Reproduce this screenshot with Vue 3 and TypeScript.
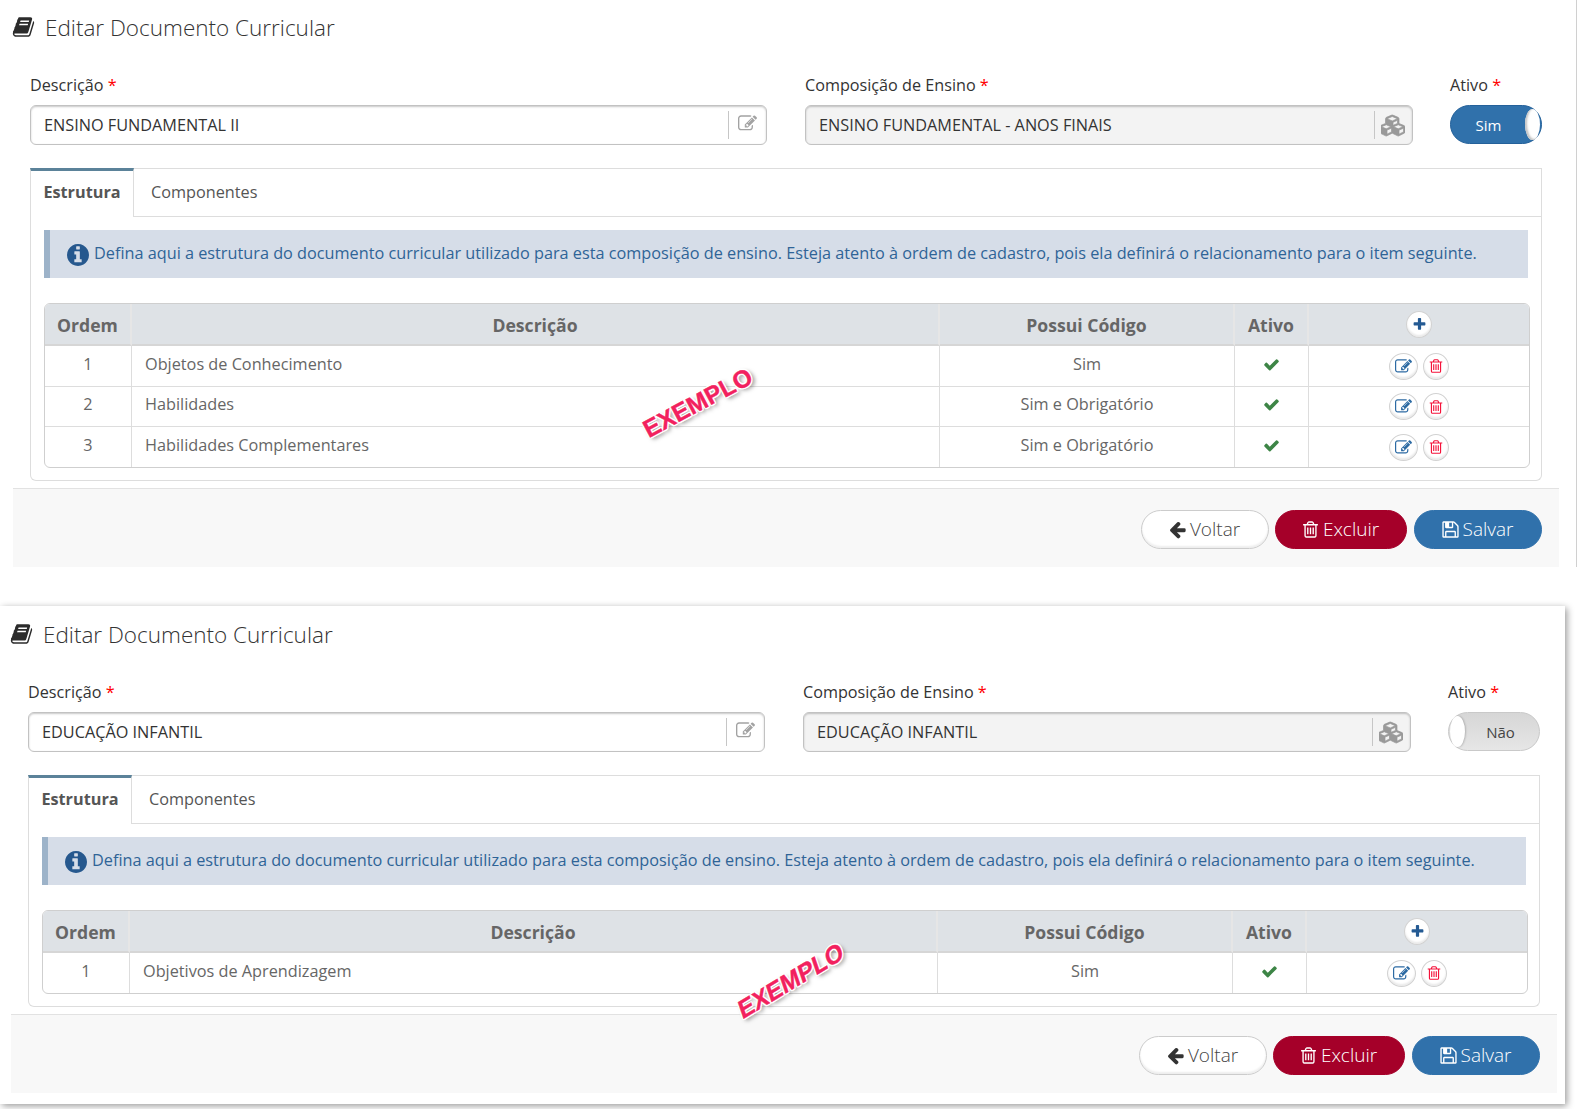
<script setup lang="ts">
const icons: Record<string, string> = {
  book: 'M1703 478q40 57 18 129l-275 906q-19 64-76.5 107.5t-122.5 43.5h-923q-77 0-148.5-53.5t-99.5-131.5q-24-67-2-127 0-4 3-27t4-37q1-8-3-21.5t-3-19.5q2-11 8-21t16.5-23.5 16.5-23.5q23-38 45-91.5t30-91.5q3-10 .5-30t-.5-28q3-11 17-28t17-23q21-36 42-92t25-90q1-9-2.5-32t.5-28q4-13 22-30.5t22-22.5q19-26 42.5-84.5t27.5-96.5q1-8-3-25.5t-2-26.5q2-8 9-18t18-23 17-21q8-12 16.5-30.5t15-35 16-36 19.5-32 26.5-23.5 36-11.5 47.5 5.5l-1 3q38-9 51-9h761q74 0 114 56t18 130l-274 906q-36 119-71.5 153.5t-128.5 34.5h-869q-27 0-38 15-11 16-1 43 24 70 144 70h923q29 0 56-15.5t35-41.5l300-987q7-22 5-57 38 15 59 43zm-1064 2q-4 13 2 22.5t20 9.5h608q13 0 25.5-9.5t16.5-22.5l21-64q4-13-2-22.5t-20-9.5h-608q-13 0-25.5 9.5t-16.5 22.5zm-83 256q-4 13 2 22.5t20 9.5h608q13 0 25.5-9.5t16.5-22.5l21-64q4-13-2-22.5t-20-9.5h-608q-13 0-25.5 9.5t-16.5 22.5z',
  edit: 'M888 1184l116-116-152-152-116 116v56h96v96h56zm440-720q-16-16-33 1l-350 350q-17 17-1 33t33-1l350-350q17-17 1-33zm80 594v190q0 119-84.5 203.5t-203.5 84.5h-832q-119 0-203.5-84.5t-84.5-203.5v-832q0-119 84.5-203.5t203.5-84.5h832q63 0 117 25 15 7 18 23 3 17-9 29l-49 49q-14 14-32 8-23-6-45-6h-832q-66 0-113 47t-47 113v832q0 66 47 113t113 47h832q66 0 113-47t47-113v-126q0-13 9-22l64-64q15-15 35-7t20 29zm-96-738l288 288-672 672h-288v-288zm444 132l-92 92-288-288 92-92q28-28 68-28t68 28l152 152q28 28 28 68t-28 68z',
  cubes: 'M512 1632l384-192v-314l-384 164v342zm-64-454l404-173-404-173-404 173zm1088 454l384-192v-314l-384 164v342zm-64-454l404-173-404-173-404 173zm-448-293l384-165v-266l-384 164v267zm-64-379l441-189-441-189-441 189zm1088 518v416q0 36-19 67t-52 47l-448 224q-25 14-57 14t-57-14l-448-224q-4-2-7-4-2 2-7 4l-448 224q-25 14-57 14t-57-14l-448-224q-33-16-52-47t-19-67v-416q0-38 21.5-70t56.5-48l434-186v-400q0-38 21.5-70t56.5-48l448-192q23-10 50-10t50 10l448 192q35 16 56.5 48t21.5 70v400l434 186q36 16 57 48t21 70z',
  info: 'M1152 1376v-160q0-14-9-23t-23-9h-96v-512q0-14-9-23t-23-9h-320q-14 0-23 9t-9 23v160q0 14 9 23t23 9h96v320h-96q-14 0-23 9t-9 23v160q0 14 9 23t23 9h448q14 0 23-9t9-23zm-128-896v-160q0-14-9-23t-23-9h-192q-14 0-23 9t-9 23v160q0 14 9 23t23 9h192q14 0 23-9t9-23zm640 416q0 209-103 385.5t-279.5 279.5-385.5 103-385.5-103-279.5-279.5-103-385.5 103-385.5 279.5-279.5 385.5-103 385.5 103 279.5 279.5 103 385.5z',
  check: 'M1671 566q0 40-28 68l-724 724-136 136q-28 28-68 28t-68-28l-136-136-362-362q-28-28-28-68t28-68l136-136q28-28 68-28t68 28l294 295 656-657q28-28 68-28t68 28l136 136q28 28 28 68z',
  plus: 'M1600 736v192q0 40-28 68t-68 28h-416v416q0 40-28 68t-68 28h-192q-40 0-68-28t-28-68v-416h-416q-40 0-68-28t-28-68v-192q0-40 28-68t68-28h416v-416q0-40 28-68t68-28h192q40 0 68 28t28 68v416h416q40 0 68 28t28 68z',
  trash: 'M704 736v576q0 14-9 23t-23 9h-64q-14 0-23-9t-9-23v-576q0-14 9-23t23-9h64q14 0 23 9t9 23zm256 0v576q0 14-9 23t-23 9h-64q-14 0-23-9t-9-23v-576q0-14 9-23t23-9h64q14 0 23 9t9 23zm256 0v576q0 14-9 23t-23 9h-64q-14 0-23-9t-9-23v-576q0-14 9-23t23-9h64q14 0 23 9t9 23zm128 724v-948h-896v948q0 22 7 40.5t14.5 27 10.5 8.5h832q3 0 10.5-8.5t14.5-27 7-40.5zm-672-1076h448l-48-117q-7-9-17-11h-317q-10 2-17 11zm928 32v64q0 14-9 23t-23 9h-96v948q0 83-47 143.5t-113 60.5h-832q-66 0-113-58.5t-47-141.5v-952h-96q-14 0-23-9t-9-23v-64q0-14 9-23t23-9h309l70-167q15-37 54-63t79-26h320q40 0 79 26t54 63l70 167h309q14 0 23 9t9 23z',
  save: 'M512 1536h768v-384h-768v384zm896 0h128v-896q0-14-10-38.5t-20-34.5l-281-281q-10-10-34-20t-39-10v416q0 40-28 68t-68 28h-576q-40 0-68-28t-28-68v-416h-128v1280h128v-416q0-40 28-68t68-28h832q40 0 68 28t28 68v416zm-384-928v-320q0-13-9.5-22.5t-22.5-9.5h-192q-13 0-22.5 9.5t-9.5 22.5v320q0 13 9.5 22.5t22.5 9.5h192q13 0 22.5-9.5t9.5-22.5zm640 32v928q0 40-28 68t-68 28h-1344q-40 0-68-28t-28-68v-1344q0-40 28-68t68-28h928q40 0 88 20t76 48l280 280q28 28 48 76t20 88z',
  back: 'M1664 896v128q0 53-32.5 90.5t-84.5 37.5h-704l293 294q38 36 38 90t-38 90l-75 76q-37 37-90 37-52 0-91-37l-651-652q-37-37-37-90 0-52 37-91l651-650q38-38 91-38 52 0 90 38l75 74q38 38 38 91t-38 91l-293 293h704q52 0 84.5 37.5t32.5 90.5z',
}

interface Row { order: number; text: string; code: string }
interface Panel {
  id: string
  desc: string
  comp: string
  on: boolean
  rows: Row[]
}

const panels: Panel[] = [
  {
    id: 'a',
    desc: 'ENSINO FUNDAMENTAL II',
    comp: 'ENSINO FUNDAMENTAL - ANOS FINAIS',
    on: true,
    rows: [
      { order: 1, text: 'Objetos de Conhecimento', code: 'Sim' },
      { order: 2, text: 'Habilidades', code: 'Sim e Obrigatório' },
      { order: 3, text: 'Habilidades Complementares', code: 'Sim e Obrigatório' },
    ],
  },
  {
    id: 'b',
    desc: 'EDUCAÇÃO INFANTIL',
    comp: 'EDUCAÇÃO INFANTIL',
    on: false,
    rows: [{ order: 1, text: 'Objetivos de Aprendizagem', code: 'Sim' }],
  },
]
</script>

<template>
  <div class="page">
    <section v-for="p in panels" :key="p.id" class="panel" :class="'panel-' + p.id">
      <h1 class="title">
        <svg class="ic ic-book" viewBox="0 0 1792 1792"><path :d="icons.book" /></svg>
        <span>Editar Documento Curricular</span>
      </h1>

      <div class="form">
        <div class="field">
          <label class="lbl">Descrição <i>*</i></label>
          <div class="ctl">
            <span class="val">{{ p.desc }}</span>
            <span class="addon"><svg class="ic ic-add" viewBox="0 0 1792 1792"><path :d="icons.edit" /></svg></span>
          </div>
        </div>
        <div class="field">
          <label class="lbl">Composição de Ensino <i>*</i></label>
          <div class="ctl ctl-off">
            <span class="val">{{ p.comp }}</span>
            <span class="addon"><svg class="ic ic-cubes" viewBox="0 0 2048 1792"><path :d="icons.cubes" /></svg></span>
          </div>
        </div>
        <div class="field field-toggle">
          <label class="lbl">Ativo <i>*</i></label>
          <div class="toggle" :class="p.on ? 'on' : 'off'">
            <span class="knob"></span>
            <span class="tlabel">{{ p.on ? 'Sim' : 'Não' }}</span>
          </div>
        </div>
      </div>

      <div class="tabs">
        <div class="tabbar">
          <span class="tab active">Estrutura</span>
          <span class="tab">Componentes</span>
        </div>
        <div class="tabbody">
          <div class="alert">
            <svg class="ic ic-info" viewBox="128 128 1536 1536"><path :d="icons.info" /></svg>
            <span>Defina aqui a estrutura do documento curricular utilizado para esta composição de ensino. Esteja atento à ordem de cadastro, pois ela definirá o relacionamento para o item seguinte.</span>
          </div>
          <table class="grid">
            <colgroup>
              <col class="c1" /><col class="c2" /><col class="c3" /><col class="c4" /><col />
            </colgroup>
            <thead>
              <tr>
                <th>Ordem</th>
                <th>Descrição</th>
                <th>Possui Código</th>
                <th>Ativo</th>
                <th>
                  <button class="round r-plus" type="button">
                    <svg class="ic ic-plus" viewBox="0 0 1792 1792"><path :d="icons.plus" /></svg>
                  </button>
                </th>
              </tr>
            </thead>
            <tbody>
              <tr v-for="r in p.rows" :key="r.order">
                <td class="ctr">{{ r.order }}</td>
                <td>{{ r.text }}</td>
                <td class="ctr">{{ r.code }}</td>
                <td class="ctr chk"><svg class="ic ic-check" viewBox="0 0 1792 1792"><path :d="icons.check" /></svg></td>
                <td class="acts">
                  <span class="actwrap">
                    <button class="round r-edit" type="button">
                      <svg class="ic ic-e" viewBox="0 0 1792 1792"><path :d="icons.edit" /></svg>
                    </button>
                    <button class="round r-del" type="button">
                      <svg class="ic ic-t" viewBox="0 0 1792 1792"><path :d="icons.trash" /></svg>
                    </button>
                  </span>
                </td>
              </tr>
            </tbody>
          </table>
        </div>
      </div>

      <div class="footer">
        <button class="btn b-back" type="button"><svg class="ic" viewBox="0 0 1792 1792"><path :d="icons.back" /></svg><span>Voltar</span></button>
        <button class="btn b-del" type="button"><svg class="ic" viewBox="0 0 1792 1792"><path :d="icons.trash" /></svg><span>Excluir</span></button>
        <button class="btn b-save" type="button"><svg class="ic" viewBox="0 0 1792 1792"><path :d="icons.save" /></svg><span>Salvar</span></button>
      </div>

      <span class="stamp">EXEMPLO</span>
    </section>
  </div>
</template>

<style scoped>
.page {
  width: 1579px;
  height: 1109px;
  background: #fff;
  font-family: "Open Sans", "Liberation Sans", sans-serif;
  color: #333;
  overflow: hidden;
}
.panel {
  position: relative;
  box-sizing: border-box;
  background: #fff;
}
.panel-a {
  width: 1577px;
  height: 567px;
  padding: 0 17px 0 13px;
  border-right: 1px solid #d0d0d0;
}
.panel-b {
  width: 1565px;
  height: 498px;
  margin-top: 39px;
  padding: 0 8px 0 11px;
  box-shadow: 2px 2px 7px rgba(0, 0, 0, 0.4);
}
.ic { display: block; fill: currentColor; flex: none; }

.title {
  display: flex;
  align-items: center;
  margin: 0;
  padding-top: 10px;
  height: 46px;
  box-sizing: border-box;
  font-size: 22.5px;
  font-weight: 300;
  color: #333;
}
.panel-a .title { padding-top: 8px; }
.ic-book { width: 23px; height: 24px; margin-right: 10px; margin-left: -1px; color: #2b2b2b; }

.form {
  display: grid;
  grid-template-columns: 737px 608px 91px;
  column-gap: 38px;
  margin: 28px 18px 0 17px;
}
.panel-b .form { margin-top: 29px; }
.field-toggle { margin-left: -1px; }
.lbl {
  display: block;
  height: 22px;
  margin-bottom: 9px;
  font-size: 16.2px;
  line-height: 22px;
  color: #333;
}
.lbl i { color: #f00; font-style: normal; }
.ctl {
  display: flex;
  align-items: center;
  box-sizing: border-box;
  height: 40px;
  padding-left: 13px;
  border: 1px solid #c2c2c2;
  border-radius: 6px;
  background: #fff;
  box-shadow: inset 0 1px 2px rgba(0, 0, 0, 0.22);
}
.ctl-off { background: #f3f3f3; }
.val { flex: 1; font-size: 16.25px; color: #333; }
.addon {
  display: flex;
  align-items: center;
  justify-content: center;
  box-sizing: border-box;
  width: 38px;
  height: 28px;
  border-left: 1px solid #c6c6c6;
  color: #a2a2a2;
}
.ic-add { width: 19px; height: 19px; margin-top: -3px; }
.ic-cubes { width: 24px; height: 23px; margin-left: -2px; color: #999; stroke: currentColor; stroke-width: 60; }

.toggle {
  position: relative;
  display: flex;
  align-items: center;
  justify-content: center;
  box-sizing: border-box;
  height: 39px;
  border-radius: 20px;
  font-size: 15px;
}
.toggle.on { background: #3071ab; border: 1px solid #24619a; color: #fff; padding-right: 15px; }
.toggle.off {
  background: linear-gradient(#d6d6d6, #e6e6e6);
  border: 1px solid #c9c9c9;
  color: #444;
  padding-left: 13px;
}
.knob {
  position: absolute;
  top: 3px;
  width: 15px;
  height: 31px;
  background: #fff;
  border-radius: 50%;
}
.on .knob {
  right: 1px;
  box-shadow: inset 2px -1px 2px #c4c4c4;
}
.off .knob {
  left: 1px;
  box-shadow: 1px 0 2px rgba(0, 0, 0, 0.2);
}

.tabs { margin: 23px 17px 0; }
.tabbar {
  display: flex;
  box-sizing: border-box;
  height: 49px;
  border: 1px solid #ddd;
}
.tab {
  box-sizing: border-box;
  padding: 0 17px;
  font-size: 16.25px;
  line-height: 47px;
  color: #555;
}
.tab.active {
  width: 104px;
  height: 49px;
  margin: -1px 0 -1px -1px;
  padding: 0;
  line-height: 42px;
  text-align: center;
  font-weight: 700;
  border-top: 3px solid #5b8299;
  border-left: 1px solid #ddd;
  border-right: 1px solid #ddd;
  background: #fff;
  position: relative;
  z-index: 1;
}
.tabbody {
  box-sizing: border-box;
  padding: 13px 13px 12px;
  border: 1px solid #ddd;
  border-top: none;
  border-radius: 0 0 6px 6px;
}
.alert {
  display: flex;
  align-items: center;
  box-sizing: border-box;
  height: 48px;
  padding: 0 0 2px 18px;
  background: #d6dde8;
  border-left: 6px solid #9db3c9;
  font-size: 16.25px;
  color: #2f6497;
}
.ic-info { width: 22px; height: 22px; margin-right: 5px; margin-left: -1px; color: #26588e; margin-top: 4px; }

.grid {
  width: calc(100% + 2px);
  margin-top: 25px;
  table-layout: fixed;
  border-collapse: separate;
  border-spacing: 0;
  border: 1px solid #cfcfcf;
  border-radius: 6px;
  overflow: hidden;
  font-size: 16.25px;
  color: #666;
}
.c1 { width: 87px; }
.c2 { width: 808px; }
.c3 { width: 295px; }
.c4 { width: 74px; }
th {
  box-sizing: border-box;
  height: 42px;
  padding: 2px 0 0;
  background: #dee2e6;
  font-size: 17.6px;
  font-weight: 700;
  color: #666;
  border-bottom: 2px solid #d6d6d6;
  border-right: 2px solid #e6e6e6;
}
th:last-child { border-right: none; }
td {
  box-sizing: border-box;
  height: 40px;
  padding: 0 13px 5px;
  border-top: 1px solid #ddd;
  border-right: 1px solid #ddd;
}
.panel-a tbody tr:last-child td { height: 41px; }
tbody tr:first-child td { border-top: none; }
td:last-child { border-right: none; }
.ctr { text-align: center; padding-left: 0; padding-right: 0; }
td.chk { padding-bottom: 4px; }
.ic-check { width: 17px; height: 17px; margin: 0 auto; color: #3d8546; }
td.acts { padding: 0; }
.actwrap { display: flex; justify-content: center; gap: 5px; }
.round {
  display: flex;
  align-items: center;
  justify-content: center;
  box-sizing: border-box;
  padding: 0;
  height: 27px;
  background: #fff;
  border: 1px solid #d2d2d2;
  border-radius: 50%;
  box-shadow: inset 0 -2px 2px #eaeaea;
}
.r-plus { width: 26px; height: 27px; margin: -2px auto 0; color: #245a93; }
.r-edit { width: 29px; color: #2c6aa3; }
.r-del { width: 26px; color: #f5123a; }
.ic-plus { width: 15px; height: 15px; }
.ic-e { width: 17px; height: 17px; }
.ic-t { width: 16px; height: 16px; }

.footer {
  display: flex;
  justify-content: flex-end;
  gap: 6px;
  box-sizing: border-box;
  height: 79px;
  margin-top: 7px;
  padding: 21px 17px 0 0;
  background: #f8f8f8;
  border-top: 1px solid #e2e2e2;
}
.btn {
  display: flex;
  align-items: center;
  justify-content: center;
  gap: 3px;
  box-sizing: border-box;
  height: 39px;
  padding: 0 2px 2px 0;
  border-radius: 20px;
  font-family: inherit;
  font-size: 19px;
  font-weight: 300;
}
.btn .ic { width: 19px; height: 19px; margin-top: 2px; }
.b-back { width: 128px; background: #fff; border: 1px solid #ccc; color: #444; box-shadow: inset 0 -2px 2px #eee; }
.b-back .ic { color: #333; }
.b-del { width: 132px; margin-right: 1px; background: #a50029; border: 1px solid #a50029; color: #fff; }
.b-save { width: 128px; background: #3071ab; border: 1px solid #3071ab; color: #fff; }

.stamp {
  position: absolute;
  font-family: "Liberation Sans", Arial, sans-serif;
  font-size: 24.5px;
  font-weight: 700;
  line-height: 28px;
  color: #f2215e;
  -webkit-text-stroke: 0.4px #f2215e;
  text-shadow:
    1.5px 0 0 #fff, -1.5px 0 0 #fff, 0 1.5px 0 #fff, 0 -1.5px 0 #fff,
    1.2px 1.2px 0 #fff, -1.2px 1.2px 0 #fff, 1.2px -1.2px 0 #fff, -1.2px -1.2px 0 #fff,
    2px 3px 4px rgba(0, 0, 0, 0.5);
}
.panel-a .stamp { left: 638px; top: 389px; transform: rotate(-28deg); }
.panel-b .stamp { left: 731px; top: 361px; transform: rotate(-31deg) skewX(-12deg); }
</style>
